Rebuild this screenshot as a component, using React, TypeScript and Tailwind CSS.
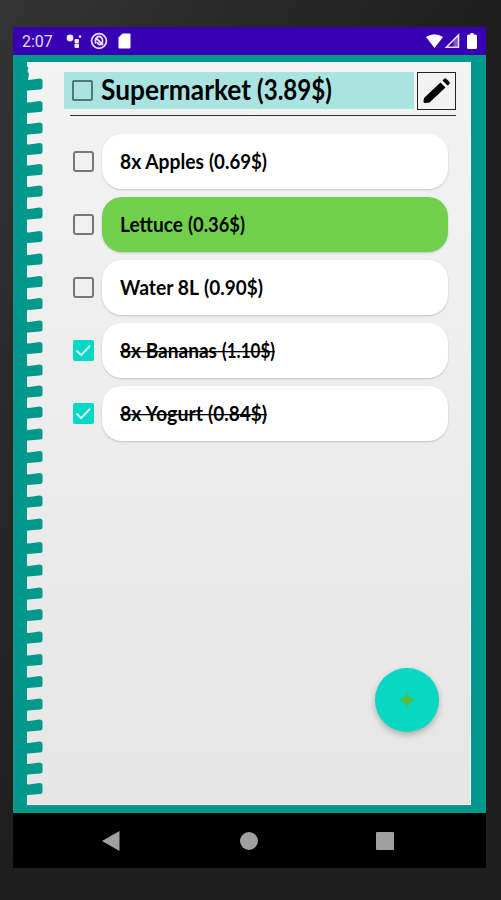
import React from "react"

interface Item {
  id: number
  name: string
  price: string
  done: boolean
  highlighted?: boolean
  nameWidth: number
  priceX: number
  priceWidth: number
}

const items: Item[] = [
  { id: 1, name: "8x Apples", price: "(0.69$)", done: false, nameWidth: 84, priceX: 89, priceWidth: 58 },
  { id: 2, name: "Lettuce", price: "(0.36$)", done: false, highlighted: true, nameWidth: 63, priceX: 68, priceWidth: 57 },
  { id: 3, name: "Water 8L", price: "(0.90$)", done: false, nameWidth: 79, priceX: 84, priceWidth: 59 },
  { id: 4, name: "8x Bananas", price: "(1.10$)", done: true, nameWidth: 97, priceX: 102, priceWidth: 53 },
  { id: 5, name: "8x Yogurt", price: "(0.84$)", done: true, nameWidth: 83, priceX: 88, priceWidth: 59 },
]

// Top edge of every punched hole in the paper, measured from the top of the sheet
const holes = [
  17, 39.5, 61, 81.5, 102.5, 124, 146, 169.5, 192, 214.5, 236.5, 259, 280.5, 303, 324, 345, 367, 389.5,
  411.5, 434, 457, 480.5, 503, 526, 547.5, 570, 592.5, 614.5, 637, 658, 680, 701, 721.5,
]

const Checkbox: React.FC<{ checked?: boolean }> = ({ checked }) => {
  if (checked) {
    return (
      <svg className="h-[21px] w-[21px] shrink-0" viewBox="0 0 21 21">
        <rect width="21" height="21" rx="2" fill="#06d8c3" />
        <path d="M3.5 10.5l4.6 4.6 9-9.4" fill="none" stroke="#d5fbf6" strokeWidth="2" />
      </svg>
    )
  }
  return <div className="h-[21px] w-[21px] shrink-0 rounded-[3px] border-2 border-[#777777]" />
}

const StatusBar = () => (
  <div className="flex h-[28px] shrink-0 items-center bg-[#3700b3] pl-[9px] pr-[9px] text-white">
    <span className="w-[32px] whitespace-nowrap pt-px font-['Roboto'] text-[16px] text-[#e6dcff]">2:07</span>
    <svg className="ml-[12px] h-[16px] w-[17px]" viewBox="0 0 17 16" fill="#eee8ff">
      <circle cx="4" cy="5" r="3.4" />
      <rect x="8.5" y="6" width="4.5" height="4" rx="1" />
      <rect x="8.5" y="10.500" width="4.5" height="4.500" rx="1" />
      <circle cx="14" cy="3.5" r="1.3" />
    </svg>
    <svg className="ml-[7px] h-[18px] w-[18px]" viewBox="0 0 18 18" fill="none" stroke="#e6dcff" strokeWidth="1.8">
      <circle cx="9" cy="9" r="7.4" />
      <path d="M5.5 11.5V8a3.5 3.5 0 0 1 7 0v2a2.5 2.5 0 0 1-5 0M6 6l7 7" />
    </svg>
    <svg className="ml-[10px] h-[16px] w-[13px]" viewBox="0 0 13 16" fill="#fff">
      <path d="M4.5 0.5H11.5Q12.5 .5 12.5 1.5V14.5Q12.5 15.5 11.5 15.5H1.5Q.5 15.5 .5 14.5V4.5z" />
    </svg>
    <svg className="ml-auto h-[16px] w-[17px]" viewBox="0 0 17 16" fill="#fff">
      <path d="M0 4Q8.500-1.500 17 4L8.500 15z" />
    </svg>
    <svg className="ml-[2px] h-[16px] w-[15px]" viewBox="0 0 15 16">
      <path d="M1.500 14.200H13.500V2z" fill="none" stroke="#e6dcff" strokeWidth="1.600" />
      <path d="M8.500 14V7.500L13.500 2V14z" fill="#e6dcff" fillOpacity=".4" />
    </svg>
    <svg className="ml-[7px] h-[16px] w-[10px]" viewBox="0 0 10 16" fill="#fff">
      <path d="M3.500 0H6.500V1.500H8.500Q10 1.500 10 3V14.500Q10 16 8.500 16H1.500Q0 16 0 14.500V3Q0 1.500 1.500 1.500H3.500z" />
    </svg>
  </div>
)

const ListItem: React.FC<{ item: Item }> = ({ item }) => (
  <div className="flex h-[55px] items-center">
    <Checkbox checked={item.done} />
    <div
      className={`ml-[8px] flex h-[55px] w-[346px] items-center rounded-[20px] pl-[17.5px] shadow-[0_1px_2px_rgba(0,0,0,0.18)] ${
        item.highlighted ? "bg-[#70d04b]" : "bg-white"
      }`}
    >
      <svg className="h-[30px] w-[200px] overflow-visible fill-black font-['Lato',sans-serif] text-[20px] font-bold">
        <text x="0" y="21.5" textLength={item.nameWidth} lengthAdjust="spacingAndGlyphs">
          {item.name}
        </text>
        <text x={item.priceX} y="21.5" textLength={item.priceWidth} lengthAdjust="spacingAndGlyphs">
          {item.price}
        </text>
        {item.done && <rect x="0" y="15" width={item.priceX + item.priceWidth} height="1.3" />}
      </svg>
    </div>
  </div>
)

const NavBar = () => (
  <div className="flex h-[55px] shrink-0 items-center bg-black pl-[89px]">
    <svg className="h-[20px] w-[18px]" viewBox="0 0 18 20" fill="#a0a0a0">
      <path d="M0 10L17.500 0V20z" />
    </svg>
    <div className="ml-[120px] h-[18px] w-[18px] rounded-full bg-[#a0a0a0]" />
    <div className="ml-[118px] h-[18px] w-[18px] rounded-[1px] bg-[#a0a0a0]" />
  </div>
)

const Paper = () => (
  <div className="relative h-[743px] w-[444px] bg-gradient-to-b from-[#f3f3f3] to-[#e6e6e6] shadow-[inset_-1px_-1px_0_#fafffe]">
    <svg className="absolute left-0 top-0 h-[743px] w-[17px]" viewBox="0 0 17 743" fill="#03988c">
      <path d="M0 4L1.500 6L.5 9L2 12L1 18H0z" />
      {holes.map((top) => (
        <path
          key={top}
          d={`M-1 ${top + 0.5}L2 ${top + 1}L12.500 ${top - 0.5}Q15.500 ${top - 0.5} 15.500 ${top + 2}V${top + 8}Q15.500 ${top + 10.5} 13 ${top + 10.5}L1 ${top + 11.5}L-1 ${top + 12}z`}
        />
      ))}
    </svg>

    <div className="flex pl-[37px] pt-[10px]">
      <div className="flex h-[37px] w-[350px] items-center bg-[#a9e4e1] pl-[8px]">
        <div className="h-[21px] w-[21px] shrink-0 rounded-[2px] border-2 border-[#527775]" />
        <svg className="ml-[8px] h-[37px] w-[240px] overflow-visible fill-black font-['Lato',sans-serif] text-[28px] font-bold">
          <text x="0" y="28" textLength="150" lengthAdjust="spacingAndGlyphs">
            Supermarket
          </text>
          <text x="156" y="28" textLength="75" lengthAdjust="spacingAndGlyphs">
            (3.89$)
          </text>
        </svg>
      </div>
      <button className="ml-[3px] flex h-[38px] w-[39px] items-center justify-center border border-[#222]">
        <svg className="h-[30px] w-[30px]" viewBox="0 0 30 30" fill="#000">
          <path d="M2 22L18.500 6.500L23.500 11.500L7.500 26.500L3 27Q1.500 27 1.500 25.500z" />
          <path d="M20.500 4.500L22.500 2.500Q23.500 2 24.500 3L27.500 6Q28 7 27.500 8L25.500 9.500z" />
        </svg>
      </button>
    </div>
    <div className="ml-[43px] mt-[5px] h-px w-[386px] bg-[#333]" />

    <div className="ml-[46px] mt-[18px] flex flex-col gap-[8px]">
      {items.map((item) => (
        <ListItem key={item.id} item={item} />
      ))}
    </div>

    <button className="absolute left-[348px] top-[606px] flex h-[64px] w-[64px] items-center justify-center rounded-full bg-[#06d8c3] shadow-[0_3px_6px_rgba(0,0,0,0.25)]">
      <svg className="h-[16px] w-[16px]" viewBox="0 0 16 16" fill="#5fbb36">
        <path d="M8 0L10.500 5.500L16 8L10.500 10.500L8 16L5.500 10.500L0 8L5.500 5.500z" />
      </svg>
    </button>
  </div>
)

export default function App() {
  return (
    <div className="h-[900px] w-[501px] overflow-hidden bg-gradient-to-br from-[#343434] via-[#1e1e1e] to-[#1e1e1e] pl-[13px] pt-[27px]">
      <div className="flex h-[841px] w-[473px] flex-col">
        <StatusBar />
        <div className="h-[758px] shrink-0 bg-[#03988c] pl-[14px] pt-[7px]">
          <Paper />
        </div>
        <NavBar />
      </div>
    </div>
  )
}
